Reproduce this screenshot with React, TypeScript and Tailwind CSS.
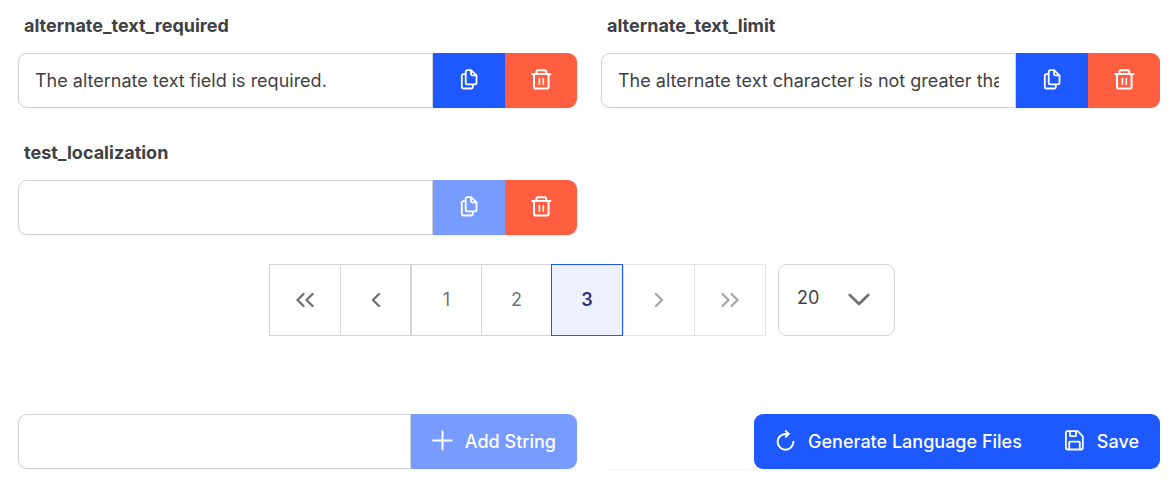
import React, { useState } from "react";

type IconProps = { className?: string };

const stroke = {
  fill: "none",
  stroke: "currentColor",
  strokeWidth: 2,
  strokeLinecap: "round" as const,
  strokeLinejoin: "round" as const,
  viewBox: "0 0 21 21",
  "aria-hidden": true,
};

const CopyIcon = ({ className }: IconProps) => (
  <svg {...stroke} strokeWidth={1.8} className={className}>
    <path d="M12 1.1H8.5a1.8 1.8 0 0 0-1.8 1.8v10.8a1.6 1.6 0 0 0 1.6 1.6h7.6a1.6 1.6 0 0 0 1.6-1.6V6.4L12 1.1Z" />
    <path d="M12 1.3v3.6a1.4 1.4 0 0 0 1.4 1.4h3.8" />
    <path d="M6.3 5.2H4.4a1.6 1.6 0 0 0-1.6 1.6v11.1a1.6 1.6 0 0 0 1.6 1.6h7.8a1.6 1.6 0 0 0 1.6-1.6v-2" />
  </svg>
);

const TrashIcon = ({ className }: IconProps) => (
  <svg {...stroke} className={className}>
    <path d="M1.1 5h18.4M5.4 4.8V2.8a1.5 1.5 0 0 1 1.5-1.5h6.8a1.5 1.5 0 0 1 1.5 1.5v2" />
    <path d="M3 5.2v12.5a1.8 1.8 0 0 0 1.8 1.8h11a1.8 1.8 0 0 0 1.8-1.8V5.2" />
    <path strokeWidth={1.6} d="M8.4 9.6v5.6M12.3 9.6v5.6" />
  </svg>
);

const PlusIcon = ({ className }: IconProps) => (
  <svg {...stroke} className={className}>
    <path d="M10.5 1.2v18.4M1.2 10.5h18.6" />
  </svg>
);

const RefreshIcon = ({ className }: IconProps) => (
  <svg {...stroke} className={className}>
    <path d="M18.4 11.8a7.9 7.9 0 1 1-7.9-7.9h3" />
    <path d="M10.8 1.1l2.9 2.8-2.9 2.8" />
  </svg>
);

const SaveIcon = ({ className }: IconProps) => (
  <svg {...stroke} strokeWidth={1.8} className={className}>
    <path d="M1.9 2.8a1.6 1.6 0 0 1 1.6-1.6h10.2l5.1 5.1v11.6a1.6 1.6 0 0 1-1.6 1.6H3.5a1.6 1.6 0 0 1-1.6-1.6Z" />
    <path d="M6 1.3v4.2a.7.7 0 0 0 .7.7h4.6a.7.7 0 0 0 .7-.7V1.3M5.2 19.4v-7a.8.8 0 0 1 .8-.8h9a.8.8 0 0 1 .8.8v7" />
  </svg>
);

const Chevron = ({ paths }: { paths: string }) => (
  <svg viewBox="0 0 20 16" className="h-4 w-5" fill="none" stroke="currentColor" strokeWidth="2.4" strokeLinejoin="round" strokeLinecap="round" aria-hidden="true">
    <path d={paths} />
  </svg>
);

const inputClass =
  "min-w-0 flex-1 rounded-l-[9px] border border-[#d1d1d3] bg-white px-4 text-lg font-normal text-[#3f3f46] outline-none";
const actionClass = "flex h-full w-[72px] items-center justify-center pb-0.5 text-white";

function StringField({ name, initial }: { name: string; initial: string }) {
  const [value, setValue] = useState(initial);
  return (
    <div>
      <label htmlFor={name} className="block pl-1.5 text-lg/7 font-bold text-[#3f3f46]">
        {name}
      </label>
      <div className="mt-[13px] flex h-[55px] rounded-[9px] shadow-xs">
        <input id={name} type="text" value={value} onChange={(e) => setValue(e.target.value)} className={inputClass} />
        <button type="button" aria-label="Copy" disabled={!value} className={`${actionClass} bg-[#1d59ff] disabled:bg-[#779bff]`}>
          <CopyIcon className="size-[21px]" />
        </button>
        <button type="button" aria-label="Delete" className={`${actionClass} rounded-r-[9px] bg-[#ff5e40]`}>
          <TrashIcon className="size-[21px]" />
        </button>
      </div>
    </div>
  );
}

const pageClass =
  "flex h-[72px] items-center justify-center border border-[#d4d4d8] text-lg font-normal text-[#71717a] disabled:border-[#e4e4e7] disabled:text-[#a7a7ae]";

export default function App() {
  const [newKey, setNewKey] = useState("");
  return (
    <main className="bg-white pt-3 pr-[11px] pb-7 pl-[18px] font-['Inter',sans-serif]">
      <div className="grid grid-cols-2 gap-x-6 gap-y-[31px]">
        <StringField name="alternate_text_required" initial="The alternate text field is required." />
        <StringField name="alternate_text_limit" initial="The alternate text character is not greater than 255." />
        <StringField name="test_localization" initial="" />
      </div>

      <nav aria-label="Pagination" className="mt-[29px] flex justify-center pr-[14px]">
        <div className="flex">
          <button type="button" aria-label="First page" className={`${pageClass} w-[72px]`}>
            <Chevron paths="M8.5 2 2.5 8l6 6M17.5 2l-6 6 6 6" />
          </button>
          <button type="button" aria-label="Previous page" className={`${pageClass} -ml-px w-[71px]`}>
            <Chevron paths="M13 2 7 8l6 6" />
          </button>
          <button type="button" className={`${pageClass} w-[71px]`}>1</button>
          <button type="button" className={`${pageClass} -ml-px w-[71px]`}>2</button>
          <button type="button" aria-current="page" className="z-10 -ml-px flex size-[72px] items-center justify-center border border-[#1d59ff] bg-[#edf1ff] text-lg font-semibold text-[#312e81]">
            3
          </button>
          <button type="button" disabled aria-label="Next page" className={`${pageClass} w-[72px]`}>
            <Chevron paths="M7 2l6 6-6 6" />
          </button>
          <button type="button" disabled aria-label="Last page" className={`${pageClass} -ml-px w-[72px]`}>
            <Chevron paths="M2.5 2l6 6-6 6M11.5 2l6 6-6 6" />
          </button>
        </div>
        <div className="relative ml-3">
          <select aria-label="Rows per page" defaultValue="20" className="h-[72px] w-[117px] appearance-none rounded-[9px] border border-[#d4d4d8] bg-white pb-1 pl-[18px] text-lg font-normal text-[#3f3f46]">
            <option>10</option>
            <option>20</option>
            <option>50</option>
          </select>
          <svg viewBox="0 0 22 14" className="pointer-events-none absolute top-7 right-[25px] h-3.5 w-[22px] text-[#71717a]" fill="none" stroke="currentColor" strokeWidth="2.7" strokeLinecap="round" strokeLinejoin="round" aria-hidden="true">
            <path d="M1.8 3 11 12l9.2-9" />
          </svg>
        </div>
      </nav>

      <div className="mt-[78px] grid grid-cols-2 gap-x-6">
        <div className="flex h-[55px] rounded-[9px] shadow-xs">
          <input type="text" aria-label="New string" value={newKey} onChange={(e) => setNewKey(e.target.value)} className={inputClass} />
          <button type="button" disabled={!newKey} className="flex items-center gap-3 rounded-r-[9px] bg-[#1d59ff] px-[21px] text-lg font-medium text-white disabled:bg-[#779bff]">
            <PlusIcon className="mb-0.5 size-[21px]" />
            Add String
          </button>
        </div>
        <div className="flex h-[55px] justify-end rounded-[9px] shadow-xs">
          <button type="button" className="flex items-center gap-3 rounded-l-[9px] bg-[#1d59ff] px-[21px] text-lg font-medium whitespace-nowrap text-white">
            <RefreshIcon className="mb-0.5 size-[21px]" />
            Generate Language Files
          </button>
          <button type="button" className="flex items-center gap-3 rounded-r-[9px] bg-[#1d59ff] px-[21px] text-lg font-medium text-white">
            <SaveIcon className="mb-0.5 size-[21px]" />
            Save
          </button>
        </div>
      </div>
    </main>
  );
}
